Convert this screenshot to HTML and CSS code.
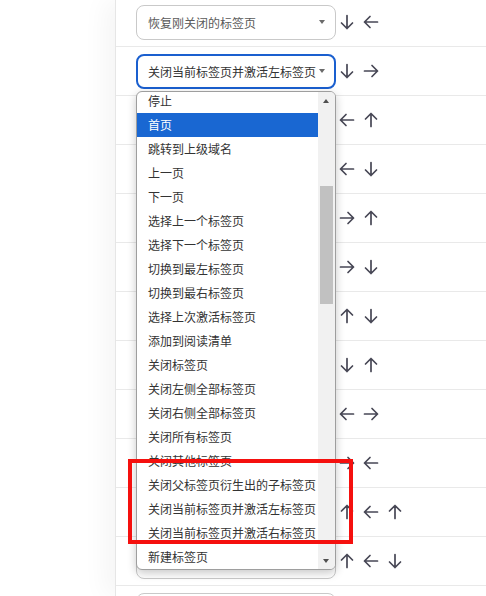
FILE: index.html
```html
<!DOCTYPE html>
<html lang="zh-CN">
<head>
<meta charset="utf-8">
<link rel="stylesheet" href="styles.css">
</head>
<body>
<svg width="0" height="0" class="defs">
  <defs>
    <symbol id="down" viewBox="0 0 16 16"><path d="M8 1.5V14.5M2.5 9L8 14.5L13.5 9"/></symbol>
    <symbol id="up" viewBox="0 0 16 16"><path d="M8 14.5V1.5M2.5 7L8 1.5L13.5 7"/></symbol>
    <symbol id="left" viewBox="0 0 16 16"><path d="M14.5 8H1.5M7 2.5L1.5 8L7 13.5"/></symbol>
    <symbol id="right" viewBox="0 0 16 16"><path d="M1.5 8H14.5M9 2.5L14.5 8L9 13.5"/></symbol>
  </defs>
</svg>
<div class="page">
  <div class="side"></div>
  <div class="panel">
    <div class="row first">
      <div class="sel muted"><span>恢复刚关闭的标签页</span><i class="caret"></i></div>
      <div class="arrows"><svg><use href="#down"/></svg><svg><use href="#left"/></svg></div>
    </div>
    <div class="row">
      <div class="sel focus"><span>关闭当前标签页并激活左标签页</span><i class="caret"></i></div>
      <div class="arrows"><svg><use href="#down"/></svg><svg><use href="#right"/></svg></div>
    </div>
    <div class="row">
      <div class="sel"><span></span><i class="caret"></i></div>
      <div class="arrows"><svg><use href="#left"/></svg><svg><use href="#up"/></svg></div>
    </div>
    <div class="row">
      <div class="sel"><span></span><i class="caret"></i></div>
      <div class="arrows"><svg><use href="#left"/></svg><svg><use href="#down"/></svg></div>
    </div>
    <div class="row">
      <div class="sel"><span></span><i class="caret"></i></div>
      <div class="arrows"><svg><use href="#right"/></svg><svg><use href="#up"/></svg></div>
    </div>
    <div class="row">
      <div class="sel"><span></span><i class="caret"></i></div>
      <div class="arrows"><svg><use href="#right"/></svg><svg><use href="#down"/></svg></div>
    </div>
    <div class="row">
      <div class="sel"><span></span><i class="caret"></i></div>
      <div class="arrows"><svg><use href="#up"/></svg><svg><use href="#down"/></svg></div>
    </div>
    <div class="row">
      <div class="sel"><span></span><i class="caret"></i></div>
      <div class="arrows"><svg><use href="#down"/></svg><svg><use href="#up"/></svg></div>
    </div>
    <div class="row">
      <div class="sel"><span></span><i class="caret"></i></div>
      <div class="arrows"><svg><use href="#left"/></svg><svg><use href="#right"/></svg></div>
    </div>
    <div class="row">
      <div class="sel"><span></span><i class="caret"></i></div>
      <div class="arrows"><svg><use href="#right"/></svg><svg><use href="#left"/></svg></div>
    </div>
    <div class="row">
      <div class="sel"><span></span><i class="caret"></i></div>
      <div class="arrows"><svg><use href="#up"/></svg><svg><use href="#left"/></svg><svg><use href="#up"/></svg></div>
    </div>
    <div class="row">
      <div class="sel"><span></span><i class="caret"></i></div>
      <div class="arrows"><svg><use href="#up"/></svg><svg><use href="#left"/></svg><svg><use href="#down"/></svg></div>
    </div>
    <div class="row">
      <div class="sel"><span></span><i class="caret"></i></div>
      <div class="arrows"><svg><use href="#down"/></svg><svg><use href="#up"/></svg></div>
    </div>
  </div>
</div>

<div class="dropdown">
  <ul class="options">
    <li>停止</li>
    <li class="active">首页</li>
    <li>跳转到上级域名</li>
    <li>上一页</li>
    <li>下一页</li>
    <li>选择上一个标签页</li>
    <li>选择下一个标签页</li>
    <li>切换到最左标签页</li>
    <li>切换到最右标签页</li>
    <li>选择上次激活标签页</li>
    <li>添加到阅读清单</li>
    <li>关闭标签页</li>
    <li>关闭左侧全部标签页</li>
    <li>关闭右侧全部标签页</li>
    <li>关闭所有标签页</li>
    <li>关闭其他标签页</li>
    <li>关闭父标签页衍生出的子标签页</li>
    <li>关闭当前标签页并激活左标签页</li>
    <li>关闭当前标签页并激活右标签页</li>
    <li>新建标签页</li>
  </ul>
  <div class="scrollbar">
    <i class="sb-up"></i>
    <div class="thumb"></div>
    <i class="sb-down"></i>
  </div>
</div>

<div class="highlight"></div>
</body>
</html>
```

FILE: styles.css
```css
* { box-sizing: border-box; }
html, body {
  margin: 0;
  padding: 0;
  width: 486px;
  height: 596px;
  overflow: hidden;
  background: #fff;
  font-family: "Noto Sans CJK SC", "Noto Sans", sans-serif;
}
.defs { position: absolute; }

.page {
  display: flex;
  height: 596px;
  overflow: hidden;
}
.side {
  width: 115px;
  flex: none;
  background: #fff;
}
.panel {
  flex: 1;
  border-left: 1px solid #e6e6e6;
  box-shadow: -10px 0 24px rgba(0, 0, 0, 0.045);
  background: #fff;
}

.row {
  height: 49px;
  border-bottom: 1px solid #e9e9e9;
  display: flex;
  align-items: center;
  padding-left: 20px;
}
.row.first { margin-top: -2px; }

.sel {
  width: 200px;
  height: 35px;
  flex: none;
  border: 1px solid #c9c9c9;
  border-radius: 8px;
  display: flex;
  align-items: center;
  padding: 0 10px 0 11px;
  font-size: 12px;
  color: #333;
  background: #fff;
}
.sel span { flex: 1; white-space: nowrap; overflow: hidden; }
.sel.muted { color: #5a5a5a; }
.sel.focus {
  border: 2px solid #1a5fcf;
  padding-left: 10px;
  padding-right: 9px;
}
.caret {
  width: 0;
  height: 0;
  border-left: 3.5px solid transparent;
  border-right: 3.5px solid transparent;
  border-top: 4px solid #6a6a6a;
  flex: none;
}

.arrows {
  display: flex;
  gap: 8px;
  margin-left: 3px;
}
.arrows svg {
  width: 16px;
  height: 16px;
  fill: none;
  stroke: #474755;
  stroke-width: 1.7;
  stroke-linecap: round;
  stroke-linejoin: round;
}

.dropdown {
  position: absolute;
  left: 136px;
  top: 91px;
  width: 200px;
  height: 479px;
  background: #fff;
  border: 1px solid #9e9e9e;
  border-radius: 6px;
  box-shadow: 0 3px 10px rgba(0, 0, 0, 0.22);
  overflow: hidden;
  display: flex;
}
.options {
  list-style: none;
  margin: -3px 0 0 0;
  padding: 0;
  flex: 1;
}
.options li {
  height: 24px;
  line-height: 24px;
  padding-left: 11px;
  font-size: 12px;
  color: #333;
  white-space: nowrap;
}
.options li.active {
  background: #1967d2;
  color: #fff;
}

.scrollbar {
  width: 17px;
  flex: none;
  background: #f1f1f1;
  position: relative;
}
.sb-up, .sb-down {
  position: absolute;
  left: 5px;
  width: 0;
  height: 0;
  border-left: 3.5px solid transparent;
  border-right: 3.5px solid transparent;
}
.sb-up { top: 7px; border-bottom: 4px solid #505050; }
.sb-down { bottom: 6px; border-top: 4px solid #505050; }
.thumb {
  position: absolute;
  left: 2px;
  right: 2px;
  top: 94px;
  height: 118px;
  background: #c1c1c1;
}

.highlight {
  position: absolute;
  left: 128px;
  top: 459px;
  width: 225px;
  height: 85px;
  border: 4px solid #f5100e;
}
```
